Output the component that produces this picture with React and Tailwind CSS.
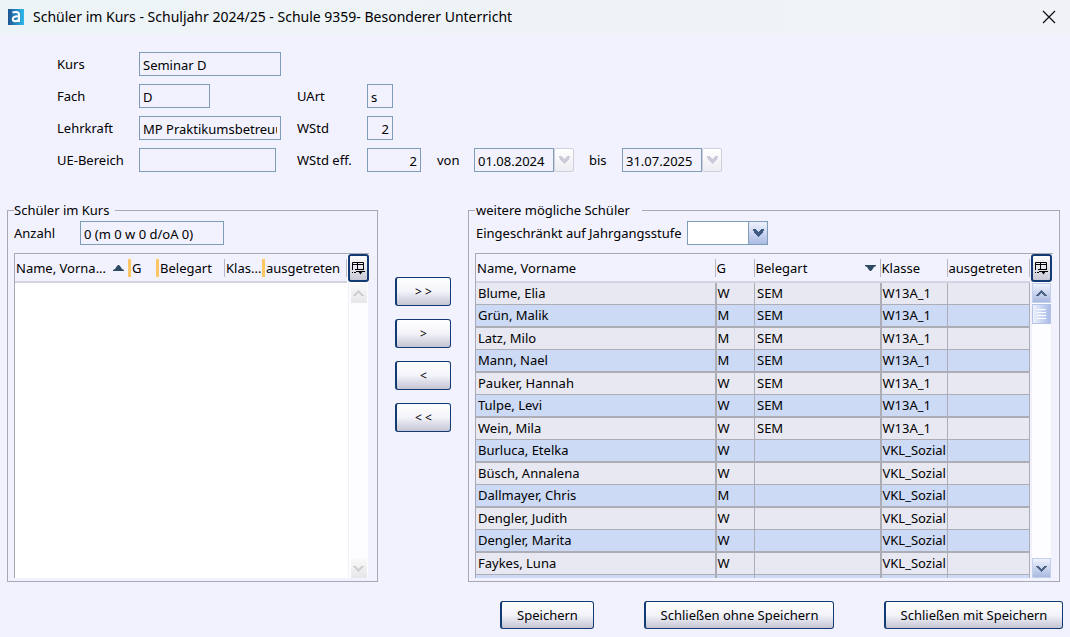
import { useState } from 'react'

const students = [
  ['Blume, Elia', 'W', 'SEM', 'W13A_1'],
  ['Grün, Malik', 'M', 'SEM', 'W13A_1'],
  ['Latz, Milo', 'M', 'SEM', 'W13A_1'],
  ['Mann, Nael', 'M', 'SEM', 'W13A_1'],
  ['Pauker, Hannah', 'W', 'SEM', 'W13A_1'],
  ['Tulpe, Levi', 'W', 'SEM', 'W13A_1'],
  ['Wein, Mila', 'W', 'SEM', 'W13A_1'],
  ['Burluca, Etelka', 'W', '', 'VKL_Sozial'],
  ['Büsch, Annalena', 'W', '', 'VKL_Sozial'],
  ['Dallmayer, Chris', 'M', '', 'VKL_Sozial'],
  ['Dengler, Judith', 'W', '', 'VKL_Sozial'],
  ['Dengler, Marita', 'W', '', 'VKL_Sozial'],
  ['Faykes, Luna', 'W', '', 'VKL_Sozial'],
  ['', '', '', ''],
]

function Logo() {
  return (
    <svg width="16" height="16" viewBox="0 0 16 16" aria-hidden="true">
      <defs>
        <linearGradient id="logo" x1="0" x2="1">
          <stop offset="0" stopColor="#1c5592" />
          <stop offset="1" stopColor="#2fb9ec" />
        </linearGradient>
      </defs>
      <rect width="16" height="16" fill="url(#logo)" />
      <path d="M4.5 3.6C6.5 2.6 11 2.2 11 5.8V13M11 7.4C7.5 7.2 4.8 7.8 4.8 10.1C4.8 13.1 9.5 12.8 11 10.4" fill="none" stroke="#fff" strokeWidth="2" />
    </svg>
  )
}

function Chevron() {
  return (
    <svg width="11" height="8" viewBox="0 0 11 8" aria-hidden="true">
      <path d="M0 0H3V1H4V2H5V3H6V2H7V1H8V0H11V2H10V4H9V5H8V6H7V7H6V8H5V7H4V6H3V5H2V4H1V2H0Z" fill="currentColor" />
    </svg>
  )
}

// stepped scroll arrow, points up unless flipped
function ScrollArrow({ down }) {
  return (
    <svg width="11" height="7" viewBox="0 0 11 7" className={down ? 'rotate-180' : ''} aria-hidden="true">
      <path d="M5 0H6V1H7V2H8V3H9V4H10V5H11V6H8V5H7V4H6V3H5V4H4V5H3V6H0V5H1V4H2V3H3V2H4V1H5Z" fill="currentColor" />
    </svg>
  )
}

function ColumnButton() {
  return (
    <button
      aria-label="Spalten"
      className="flex h-[28px] w-[21px] shrink-0 items-center justify-center rounded-[3px] border-2 border-[#123b74] bg-linear-to-b from-white to-[#c9c9d6]"
    >
      <svg width="13" height="13" viewBox="0 0 13 13" fill="none" stroke="#000" aria-hidden="true">
        <path d="M0.5 8V0.5H11.5V7M0 2.5H12M5.5 0V7M3 7.5H12M0 10.5H1M2 10.5H4M4 9.5H13" />
        <path d="M6 9H11L8.5 12.5Z" fill="#000" stroke="none" />
      </svg>
    </button>
  )
}

function Scrollbar({ disabled }) {
  const arrow = disabled
    ? 'flex h-5 w-4 items-center justify-center bg-linear-to-b from-[#fafafa] to-[#e6e6ea] text-[#cfcfd3]'
    : 'flex h-5 w-[19px] items-center justify-center border border-[#c3d0ec] bg-linear-to-b from-[#eef2fd] to-[#a9b9e0] text-[#4d6385]'
  return (
    <div className="flex min-h-0 flex-1 flex-col items-center border-x border-[#f0f0fb] bg-[#fdfdff] pt-px">
      <button aria-label="Nach oben" disabled={disabled} className={arrow}><ScrollArrow /></button>
      {!disabled && (
        <div className="mt-px flex h-5 w-[19px] flex-col items-center justify-center gap-[2px] border border-[#b4c3e6] bg-linear-to-r from-[#eef2fd] to-[#a9bbe6]">
          <span className="h-px w-[9px] bg-white" />
          <span className="h-px w-[9px] bg-white" />
          <span className="h-px w-[9px] bg-white" />
          <span className="h-px w-[9px] bg-white" />
        </div>
      )}
      <div className="flex-1" />
      <button aria-label="Nach unten" disabled={disabled} className={arrow}><ScrollArrow down /></button>
    </div>
  )
}

function HeadCell({ children, sort, orange }) {
  const line = orange ? 'border-r-[3px] border-[#ffc665]' : 'border-r border-[#b9b9c6]'
  return (
    <th className="h-[28px] border-b-2 border-[#d2d2e0] bg-[#f2f2ff] p-0 text-left font-normal">
      <div className={`flex h-[18px] items-center justify-between pr-1 pl-px ${line}`}>
        <span className="whitespace-nowrap">{children}</span>
        {sort && (
          <svg width="11" height="6" viewBox="0 0 11 6" className={sort === 'up' ? 'shrink-0' : 'shrink-0 rotate-180'} aria-hidden="true">
            <path d="M0 6V5L2 4L4 1L5 0H6L7 1L9 4L11 5V6Z" fill="#2c4a63" />
          </svg>
        )}
      </div>
    </th>
  )
}

function Field({ id, value, className }) {
  return (
    <input
      id={id}
      defaultValue={value}
      className={`h-6 rounded-none border border-[#7f9db9] bg-transparent px-[3px] pt-[2px] outline-none ${className}`}
    />
  )
}

function DateField({ id, value }) {
  return (
    <div className="flex">
      <Field id={id} value={value} className="w-20" />
      <button
        aria-label="Datum wählen"
        className="flex h-6 w-5 items-center justify-center rounded-[2px] border border-[#d0d0dc] bg-linear-to-b from-white to-[#ededf2] text-[#cccbd9]"
      >
        <Chevron />
      </button>
    </div>
  )
}

function PushButton({ children, className }) {
  return (
    <button
      className={`rounded-[3px] border border-l-2 border-[#123b74] bg-linear-to-b from-white via-[#f3f3fa] to-[#c5c5d4] ${className}`}
    >
      {children}
    </button>
  )
}

export default function App() {
  const [stufe, setStufe] = useState('')

  return (
    <div className="flex h-screen flex-col overflow-hidden bg-[#f2f2ff] font-['Noto_Sans','Open_Sans',sans-serif] text-[13px] leading-5 text-black">
      <header className="flex h-[34px] shrink-0 items-center bg-linear-to-r from-[#edf4f7] to-[#f0f2f7] pr-[14px] pb-px pl-2">
        <Logo />
        <h1 className="ml-[9px] flex-1 text-sm">
          Schüler im Kurs - Schuljahr 2024/25 - Schule 9359- Besonderer Unterricht
        </h1>
        <button aria-label="Schließen">
          <svg width="14" height="14" viewBox="0 0 14 14" stroke="#111" strokeWidth="1.3" aria-hidden="true">
            <path d="M1 1L13 13M13 1L1 13" />
          </svg>
        </button>
      </header>

      <div className="mt-[18px] grid shrink-0 grid-cols-[82px_158px_70px_1fr] items-center gap-y-2 pl-[57px]">
        <label htmlFor="kurs">Kurs</label>
        <Field id="kurs" value="Seminar D" className="w-[142px]" />
        <span />
        <span />

        <label htmlFor="fach">Fach</label>
        <Field id="fach" value="D" className="w-[71px]" />
        <label htmlFor="uart">UArt</label>
        <Field id="uart" value="s" className="w-[26px]" />

        <label htmlFor="lehrkraft">Lehrkraft</label>
        <Field id="lehrkraft" value="MP Praktikumsbetreuung" className="w-[142px]" />
        <label htmlFor="wstd">WStd</label>
        <Field id="wstd" value="2" className="w-[26px] text-right" />

        <label htmlFor="bereich">UE-Bereich</label>
        <Field id="bereich" value="" className="w-[137px]" />
        <label htmlFor="eff">WStd eff.</label>
        <div className="flex items-center">
          <Field id="eff" value="2" className="w-[54px] text-right" />
          <label htmlFor="von" className="w-[53px] pl-4">von</label>
          <DateField id="von" value="01.08.2024" />
          <label htmlFor="bis" className="w-12 pl-[15px]">bis</label>
          <DateField id="bis" value="31.07.2025" />
        </div>
      </div>

      <main className="mt-7 grid min-h-0 flex-1 grid-cols-[371fr_90px_592fr] pr-[10px] pl-[7px]">
        <fieldset className="flex min-h-0 min-w-0 flex-col border border-[#a9a9b5] pr-2 pb-[3px] pl-[6px]">
          <legend className="pr-[6px]">Schüler im Kurs</legend>
          <div className="flex shrink-0 items-center pt-px">
            <label htmlFor="anzahl" className="w-[66px]">Anzahl</label>
            <Field id="anzahl" value="0 (m 0 w 0 d/oA 0)" className="w-36" />
          </div>
          <div className="mt-2 flex min-h-0 flex-1 border-t border-l border-[#a9a9b5] bg-white">
            <div className="min-w-0 flex-1 overflow-hidden">
              <table className="w-full table-fixed border-collapse">
                <colgroup>
                  <col className="w-[116px]" />
                  <col className="w-[28px]" />
                  <col className="w-[66px]" />
                  <col className="w-[40px]" />
                  <col />
                </colgroup>
                <thead>
                  <tr>
                    <HeadCell sort="up" orange>Name, Vorna...</HeadCell>
                    <HeadCell orange>G</HeadCell>
                    <HeadCell>Belegart</HeadCell>
                    <HeadCell orange>Klas...</HeadCell>
                    <HeadCell>ausgetreten</HeadCell>
                  </tr>
                </thead>
              </table>
            </div>
            <div className="flex flex-col pl-px">
              <ColumnButton />
              <Scrollbar disabled />
            </div>
          </div>
        </fieldset>

        <div className="flex flex-col gap-[13px] px-[17px] pt-[77px]">
          <PushButton className="h-[29px] text-xs">&gt; &gt;</PushButton>
          <PushButton className="h-[29px] text-xs">&gt;</PushButton>
          <PushButton className="h-[29px] text-xs">&lt;</PushButton>
          <PushButton className="h-[29px] text-xs">&lt; &lt;</PushButton>
        </div>

        <fieldset className="flex min-h-0 min-w-0 flex-col border border-[#a9a9b5] px-[6px] pb-[3px]">
          <legend className="px-px pr-3">weitere mögliche Schüler</legend>
          <div className="flex shrink-0 items-center pt-px pl-px">
            <label htmlFor="stufe" className="w-[211px]">Eingeschränkt auf Jahrgangsstufe</label>
            <div className="relative">
              <select
                id="stufe"
                value={stufe}
                onChange={(e) => setStufe(e.target.value)}
                className="block h-6 w-[81px] appearance-none rounded-none border border-[#7f9db9] bg-white px-1 outline-none"
              >
                <option value=""></option>
                <option value="12">12</option>
                <option value="13">13</option>
              </select>
              <span className="pointer-events-none absolute top-0 right-0 flex h-6 w-5 items-center justify-center rounded-[2px] border border-[#7f9db9] bg-linear-to-b from-[#eef2fe] to-[#aabbe4] text-[#3f5a80]">
                <Chevron />
              </span>
            </div>
          </div>
          <div className="mt-2 flex min-h-0 flex-1 border-t border-l border-[#a9a9b5] pr-px">
            <div className="min-w-0 flex-1 overflow-hidden">
              <table className="w-full table-fixed border-collapse">
                <colgroup>
                  <col />
                  <col className="w-[39px]" />
                  <col className="w-[126px]" />
                  <col className="w-[67px]" />
                  <col className="w-[82px]" />
                </colgroup>
                <thead>
                  <tr>
                    <HeadCell>Name, Vorname</HeadCell>
                    <HeadCell>G</HeadCell>
                    <HeadCell sort="down">Belegart</HeadCell>
                    <HeadCell>Klasse</HeadCell>
                    <HeadCell>ausgetreten</HeadCell>
                  </tr>
                </thead>
                <tbody>
                  {students.map(([name, g, art, klasse], i) => (
                    <tr key={i} className="h-[22px] border-b border-[#adadb5] bg-[#e8e8f2] even:h-[23px] even:border-b-2 even:bg-[#ccdaf6]">
                      <td className="border-r-2 border-[#adadb5] p-0 pl-[2px]">{name}</td>
                      <td className="border-r border-[#adadb5] p-0 pl-px">{g}</td>
                      <td className="border-r-2 border-[#adadb5] p-0 pl-[2px]">{art}</td>
                      <td className="overflow-hidden border-r border-[#adadb5] p-0 pl-px">{klasse}</td>
                      <td className="border-r border-[#adadb5] p-0" />
                    </tr>
                  ))}
                </tbody>
              </table>
            </div>
            <div className="flex flex-col pl-px">
              <ColumnButton />
              <Scrollbar />
            </div>
          </div>
        </fieldset>
      </main>

      <footer className="flex shrink-0 justify-end gap-[50px] pt-[19px] pr-[7px] pb-2">
        <PushButton className="h-7 w-[94px]">Speichern</PushButton>
        <PushButton className="h-7 w-[190px]">Schließen ohne Speichern</PushButton>
        <PushButton className="h-7 w-[179px]">Schließen mit Speichern</PushButton>
      </footer>
    </div>
  )
}
